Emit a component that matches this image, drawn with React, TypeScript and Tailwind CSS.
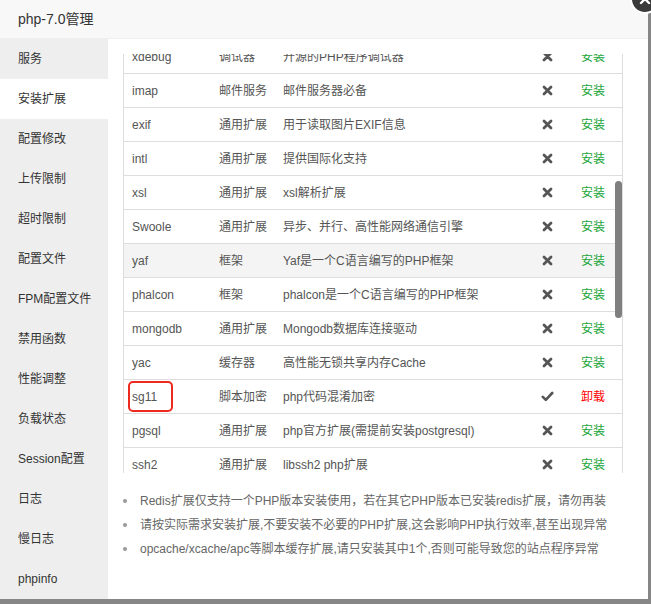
import React from "react";

const font = "font-['Liberation_Sans','Noto_Sans_CJK_SC',sans-serif]";

const menu = [
  "服务",
  "安装扩展",
  "配置修改",
  "上传限制",
  "超时限制",
  "配置文件",
  "FPM配置文件",
  "禁用函数",
  "性能调整",
  "负载状态",
  "Session配置",
  "日志",
  "慢日志",
  "phpinfo",
];

type Row = { name: string; type: string; desc: string; installed?: boolean; hover?: boolean; mark?: boolean };

const rows: Row[] = [
  { name: "xdebug", type: "调试器", desc: "开源的PHP程序调试器" },
  { name: "imap", type: "邮件服务", desc: "邮件服务器必备" },
  { name: "exif", type: "通用扩展", desc: "用于读取图片EXIF信息" },
  { name: "intl", type: "通用扩展", desc: "提供国际化支持" },
  { name: "xsl", type: "通用扩展", desc: "xsl解析扩展" },
  { name: "Swoole", type: "通用扩展", desc: "异步、并行、高性能网络通信引擎" },
  { name: "yaf", type: "框架", desc: "Yaf是一个C语言编写的PHP框架", hover: true },
  { name: "phalcon", type: "框架", desc: "phalcon是一个C语言编写的PHP框架" },
  { name: "mongodb", type: "通用扩展", desc: "Mongodb数据库连接驱动" },
  { name: "yac", type: "缓存器", desc: "高性能无锁共享内存Cache" },
  { name: "sg11", type: "脚本加密", desc: "php代码混淆加密", installed: true, mark: true },
  { name: "pgsql", type: "通用扩展", desc: "php官方扩展(需提前安装postgresql)" },
  { name: "ssh2", type: "通用扩展", desc: "libssh2 php扩展" },
];

const notes = [
  "Redis扩展仅支持一个PHP版本安装使用，若在其它PHP版本已安装redis扩展，请勿再装",
  "请按实际需求安装扩展,不要安装不必要的PHP扩展,这会影响PHP执行效率,甚至出现异常",
  "opcache/xcache/apc等脚本缓存扩展,请只安装其中1个,否则可能导致您的站点程序异常",
];

function XIcon() {
  return (
    <svg width="11" height="11" viewBox="0 0 11 11">
      <path d="M2 2 L9 9 M9 2 L2 9" stroke="#555" strokeWidth="2.8" strokeLinecap="round" />
    </svg>
  );
}

function CheckIcon() {
  return (
    <svg width="13" height="11" viewBox="0 0 13 11">
      <path d="M1.8 5.8 L4.8 8.8 L11.2 2" stroke="#555" strokeWidth="2.6" fill="none" strokeLinecap="round" strokeLinejoin="round" />
    </svg>
  );
}

export default function App() {
  return (
    <div className={`relative w-[651px] h-[604px] overflow-hidden bg-[#868686] ${font}`}>
      <div className="relative w-[648px] h-[599px] bg-white flex flex-col">
        <div className="h-[39px] shrink-0 bg-[#f8f8f8] border-b border-[#eeeeee] flex items-center pl-[18px] text-[14px] text-[#333]">
          php-7.0管理
        </div>
        <div className="flex flex-1 min-h-0">
          <div className="w-[108px] shrink-0 bg-[#eeeeee] flex flex-col">
            {menu.map((m, i) => (
              <div
                key={m}
                className={`h-[40px] flex items-center pl-[18px] text-[12px] text-[#333] ${i === 1 ? "bg-white" : ""}`}
              >
                {m}
              </div>
            ))}
          </div>
          <div className="flex-1 pl-[15px] pt-[15px]">
            <div className="relative w-[500px] h-[419px] overflow-hidden border-l border-r border-[#dddddd]">
              <div className="-mt-[14px] flex flex-col">
                {rows.map((r) => (
                  <div
                    key={r.name}
                    className={`h-[34px] flex items-center border-b border-[#dddddd] text-[12px] text-[#555] ${r.hover ? "bg-[#f4f4f4]" : ""}`}
                  >
                    <div className="relative w-[87px] h-full flex items-center pl-2">
                      {r.name}
                      {r.mark && (
                        <div className="absolute left-[4px] top-[1px] w-[45px] h-[31px] border-2 border-[#ec2a1f] rounded-[5px]" />
                      )}
                    </div>
                    <div className="w-[64px] pl-2">{r.type}</div>
                    <div className="w-[246px] pl-2 whitespace-nowrap">{r.desc}</div>
                    <div className="w-[52px] flex justify-center">{r.installed ? <CheckIcon /> : <XIcon />}</div>
                    <div className={`flex-1 pl-2 ${r.installed ? "text-[#ff0000]" : "text-[#20a53a]"}`}>
                      {r.installed ? "卸载" : "安装"}
                    </div>
                  </div>
                ))}
              </div>
              <div className="absolute right-0 top-[127px] w-[7px] h-[137px] rounded-full bg-[#7f7f7f]" />
            </div>
            <ul className="mt-[16px] flex flex-col">
              {notes.map((n) => (
                <li key={n} className="h-[24px] flex items-center text-[12px] text-[#666] whitespace-nowrap">
                  <span className="w-[4px] h-[4px] rounded-full bg-[#999] mr-[13px] shrink-0" />
                  {n}
                </li>
              ))}
            </ul>
          </div>
        </div>
        <div className="absolute left-[630px] top-[-16px] w-[30px] h-[30px] rounded-full bg-[#3a3a3a] border-2 border-white flex items-center justify-center">
          <svg width="12" height="12" viewBox="0 0 12 12">
            <path d="M2 2 L10 10 M10 2 L2 10" stroke="white" strokeWidth="2.4" strokeLinecap="round" />
          </svg>
        </div>
      </div>
    </div>
  );
}
